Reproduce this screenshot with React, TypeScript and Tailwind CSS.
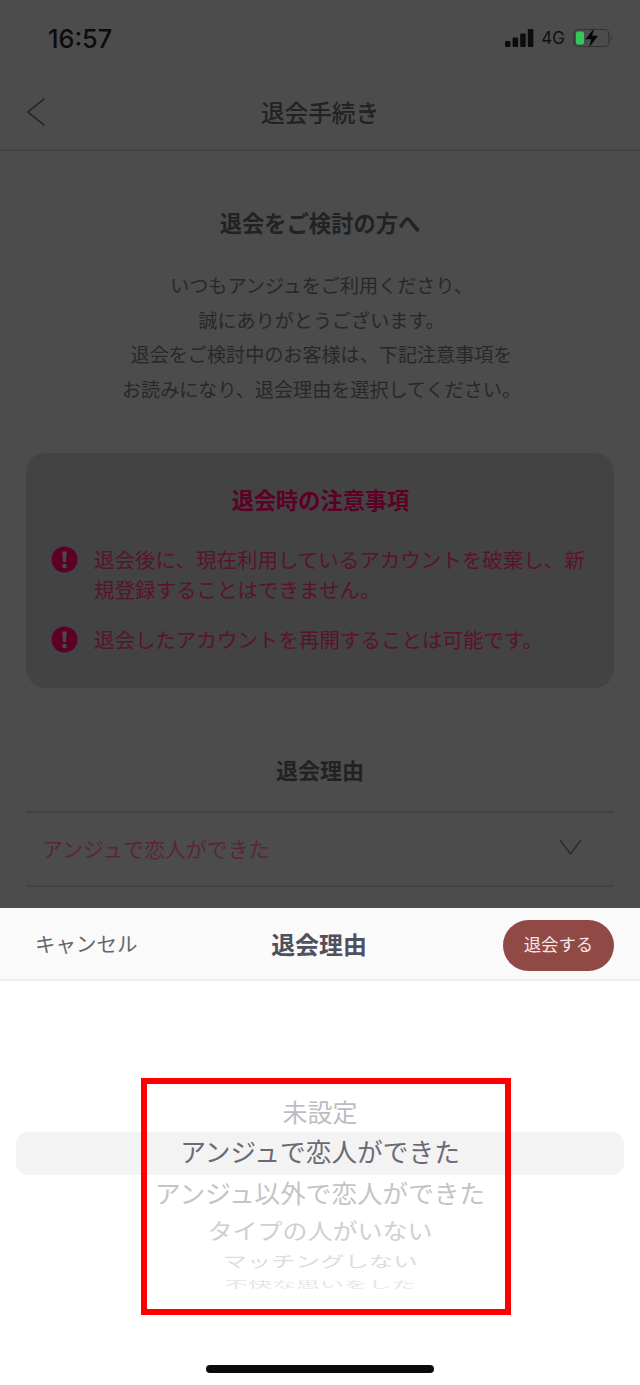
export default function App() {
  const wheel = [
    { t: "未設定", h: "h-[40px]", f: "text-[25px]", c: "text-[#bdbdc1]", s: "scale-y-[0.98]" },
    { t: "アンジュで恋人ができた", h: "h-[40px]", f: "text-[25.7px]", c: "text-[#6a6a75]", s: "scale-y-100" },
    { t: "アンジュ以外で恋人ができた", h: "h-[41px]", f: "text-[25.6px]", c: "text-[#c4c4c8]", s: "scale-y-[0.98]" },
    { t: "タイプの人がいない", h: "h-[34px]", f: "text-[25px]", c: "text-[#cfcfd2]", s: "scale-y-[0.88]" },
    { t: "マッチングしない", h: "h-[30px]", f: "text-[24.4px]", c: "text-[#dcdcde]", s: "scale-y-[0.62]" },
    { t: "不快な思いをした", h: "h-[16px]", f: "text-[24px]", c: "text-[#e6e6e8]", s: "scale-y-[0.38]" },
  ];
  const notes = [
    "退会後に、現在利用しているアカウントを破棄し、新規登録することはできません。",
    "退会したアカウントを再開することは可能です。",
  ];
  return (
    <div className="relative flex h-[1385px] w-[640px] flex-col overflow-hidden bg-[#4c4c4c] font-['Noto_Sans_CJK_JP','Noto_Sans',sans-serif]">
      <div className="flex h-[908px] flex-col overflow-hidden">
        <div className="flex h-[76px] items-center justify-between pl-[48px] pr-[27px]">
          <span className="mt-[2px] font-['Inter',sans-serif] text-[25.3px] leading-none font-medium text-[#0c0c0c]">16:57</span>
          <div className="flex items-center">
            <svg width="29" height="18" viewBox="0 0 29 18" fill="#0c0c0c">
              <rect x="0" y="12" width="5.5" height="6" rx="1" />
              <rect x="7.6" y="8.5" width="5.5" height="9.5" rx="1" />
              <rect x="15.2" y="4.5" width="5.5" height="13.5" rx="1" />
              <rect x="22.8" y="0" width="5.5" height="18" rx="1" />
            </svg>
            <span className="ml-[7px] font-['Inter',sans-serif] text-[17px] leading-none text-[#111111]">4G</span>
            <svg className="ml-[8px]" width="40" height="22" viewBox="0 0 40 22" fill="none">
              <rect x="1" y="2.5" width="35" height="17" rx="4.5" stroke="#333333" strokeWidth="1.2" />
              <rect x="3" y="4.5" width="8" height="13" rx="2" fill="#34c759" />
              <path d="M38 8.5c1 .5 1.2 4.5 0 5z" fill="#333333" />
              <path d="M21.5 0.5 12 12.5h6L15.5 21.5l10-13h-6z" fill="#050505" stroke="#4c4c4c" strokeWidth="0.5" />
            </svg>
          </div>
        </div>
        <div className="relative flex h-[75px] shrink-0 items-center justify-center border-b-2 border-[#424242]">
          <svg className="absolute left-[26px] top-[21px]" width="20" height="30" viewBox="0 0 20 30" fill="none" stroke="#242424" strokeWidth="1.6">
            <path d="M18.5 1.5 2 15l16.5 13.5" />
          </svg>
          <h1 className="text-[23.6px] leading-none font-medium text-[#222222]">退会手続き</h1>
        </div>
        <div className="flex flex-col px-[26px]">
          <h2 className="mt-[57px] text-center text-[22.3px] leading-[28px] font-bold text-[#222222]">退会をご検討の方へ</h2>
          <p className="mt-[32px] pl-[3px] text-center text-[19.1px] leading-[34.7px] text-[#282828]">
            いつもアンジュをご利用くださり、<br />
            誠にありがとうございます。<br />
            退会をご検討中のお客様は、下記注意事項を<br />
            お読みになり、退会理由を選択してください。
          </p>
          <div className="mt-[46px] flex h-[235px] flex-col rounded-[20px] bg-[#434343] pl-[25px] pr-[24px] pt-[31px]">
            <h3 className="text-center text-[22.2px] leading-[30px] font-bold text-[#5c0026]">退会時の注意事項</h3>
            <ul className="mt-[30px] flex flex-col gap-[20px]">
              {notes.map((n) => (
                <li key={n} className="flex gap-[16px]">
                  <svg className="mt-[2px] shrink-0" width="27" height="27" viewBox="0 0 27 27">
                    <circle cx="13.5" cy="13.5" r="13" fill="#5c0026" />
                    <path d="M11.3 5.5h4.4l-.7 10.5h-3z" fill="#4a4a4a" />
                    <circle cx="13.5" cy="20" r="2.3" fill="#4a4a4a" />
                  </svg>
                  <span className="text-[20.5px] leading-[30px] text-[#5a1230]">{n}</span>
                </li>
              ))}
            </ul>
          </div>
          <h2 className="mt-[67px] text-center text-[22px] leading-[28px] font-bold text-[#222222]">退会理由</h2>
          <div className="mt-[28px] flex h-[76px] items-center justify-between border-y-2 border-[#424242] pl-[16px] pr-[32px]">
            <span className="text-[20.9px] leading-none text-[#5a2538]">アンジュで恋人ができた</span>
            <svg className="mb-[4px]" width="23" height="16" viewBox="0 0 23 16" fill="none" stroke="#2c2c2c" strokeWidth="1.5">
              <path d="M1 1l10.5 14L22 1" />
            </svg>
          </div>
        </div>
      </div>

      <div className="flex flex-1 flex-col bg-white">
        <div className="flex h-[73px] items-center justify-between border-b-2 border-[#f0f0f1] bg-[#fafafa] pl-[35px] pr-[26px]">
          <span className="w-[106px] text-[20.5px] leading-none whitespace-nowrap text-[#65656f]">キャンセル</span>
          <span className="ml-[-6px] text-[23.9px] leading-none font-bold text-[#50505f]">退会理由</span>
          <button className="mt-[4px] flex h-[51px] w-[111px] items-center justify-center rounded-full bg-[#914946] pb-[4px] text-[17.4px] leading-none text-[#f3e6e6]">退会する</button>
        </div>
        <div className="relative mt-[111px] flex flex-col items-center">
          <div className="absolute left-[16px] top-[40px] h-[43px] w-[608px] rounded-[12px] bg-[#f3f3f4]"></div>
          {wheel.map((w) => (
            <div key={w.t} className={`relative flex w-full items-center justify-center pb-[2px] ${w.h}`}>
              <span className={`leading-none whitespace-nowrap ${w.f} ${w.c} ${w.s}`}>{w.t}</span>
            </div>
          ))}
        </div>
        <div className="mt-[72px] h-[8px] w-[228px] self-center rounded-full bg-[#0a0a0a]"></div>
      </div>

      <div className="absolute left-[141px] top-[1078px] h-[237px] w-[370px] border-[6px] border-[#fe0000]"></div>
    </div>
  );
}
